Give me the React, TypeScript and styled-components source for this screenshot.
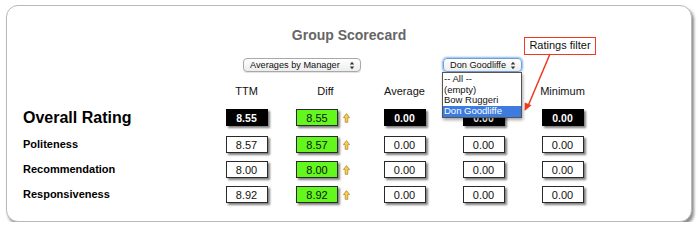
import React from "react";
import styled, { createGlobalStyle } from "styled-components";

const GlobalStyle = createGlobalStyle`
  html, body {
    margin: 0;
    padding: 0;
    background: #ffffff;
  }
  body {
    font-family: "Liberation Sans", Arial, Helvetica, sans-serif;
    color: #111;
  }
`;

type Cell = { value: string; dark?: boolean };
type Row = {
  label: string;
  main?: boolean;
  ttm: Cell;
  diff: string;
  rest: Cell[];
};

const rows: Row[] = [
  {
    label: "Overall Rating",
    main: true,
    ttm: { value: "8.55", dark: true },
    diff: "8.55",
    rest: [
      { value: "0.00", dark: true },
      { value: "0.00", dark: true },
      { value: "0.00", dark: true }
    ]
  },
  {
    label: "Politeness",
    ttm: { value: "8.57" },
    diff: "8.57",
    rest: [{ value: "0.00" }, { value: "0.00" }, { value: "0.00" }]
  },
  {
    label: "Recommendation",
    ttm: { value: "8.00" },
    diff: "8.00",
    rest: [{ value: "0.00" }, { value: "0.00" }, { value: "0.00" }]
  },
  {
    label: "Responsiveness",
    ttm: { value: "8.92" },
    diff: "8.92",
    rest: [{ value: "0.00" }, { value: "0.00" }, { value: "0.00" }]
  }
];

const headers = ["TTM", "Diff", "Average", "", "Minimum"];
const managers = ["-- All --", "(empty)", "Bow Ruggeri", "Don Goodliffe"];

const SelectArrows = () => (
  <svg width="6" height="9" viewBox="0 0 6 9">
    <polygon points="3,0.8 5.2,3.5 0.8,3.5" fill="#333" />
    <polygon points="3,8.2 5.2,5.5 0.8,5.5" fill="#333" />
  </svg>
);

const UpArrow = () => (
  <svg width="7" height="10" viewBox="0 0 7 10">
    <polygon
      points="3.5,0.6 6.6,4.6 4.8,4.6 4.8,9.3 2.2,9.3 2.2,4.6 0.4,4.6"
      fill="#f6cf52"
      stroke="#b8882c"
      strokeWidth="0.8"
      strokeLinejoin="round"
    />
  </svg>
);

const App = () => {
  return (
    <>
      <GlobalStyle />
      <Card>
        <Title>Group Scorecard</Title>
        <FilterRow>
          <ModeSelect>
            <SelectText>Averages by Manager</SelectText>
            <SelectArrows />
          </ModeSelect>
          <ManagerSlot>
            <ManagerSelect>
              <SelectText>Don Goodliffe</SelectText>
              <SelectArrows />
            </ManagerSelect>
            <OptionList>
              {managers.map((m) => (
                <OptionItem key={m} $selected={m === "Don Goodliffe"}>
                  {m}
                </OptionItem>
              ))}
            </OptionList>
          </ManagerSlot>
        </FilterRow>
        <HeaderRow>
          <span />
          {headers.map((h, i) => (
            <HeaderCell key={i}>{h}</HeaderCell>
          ))}
        </HeaderRow>
        <Rows>
          {rows.map((r) => (
            <ScoreRow key={r.label} $main={r.main}>
              <RowLabel $main={r.main}>{r.label}</RowLabel>
              <ValueBox $dark={r.ttm.dark}>{r.ttm.value}</ValueBox>
              <DiffCell>
                <ValueBox $green>{r.diff}</ValueBox>
                <UpArrow />
              </DiffCell>
              {r.rest.map((c, i) => (
                <ValueBox key={i} $dark={c.dark}>
                  {c.value}
                </ValueBox>
              ))}
            </ScoreRow>
          ))}
        </Rows>
        <Callout>Ratings filter</Callout>
        <CalloutArrow viewBox="0 0 686 217" width="686" height="217">
          <line
            x1="544"
            y1="49"
            x2="522"
            y2="101"
            stroke="#f2361f"
            strokeWidth="1.5"
          />
          <polygon points="518.5,106 518.8,97.5 525.5,100.3" fill="#f2361f" />
        </CalloutArrow>
      </Card>
    </>
  );
};

const Card = styled.div`
  position: relative;
  box-sizing: border-box;
  width: 686px;
  margin: 5px 0 0 6px;
  padding: 21px 0 18px 16px;
  border: 1px solid #b9b9b9;
  border-radius: 12px;
  background: #ffffff;
  box-shadow: 2px 3px 3px rgba(0, 0, 0, 0.45);
  display: flex;
  flex-direction: column;
`;

const Title = styled.div`
  margin-left: -16px;
  text-align: center;
  font-size: 14px;
  line-height: 16px;
  font-weight: bold;
  color: #666666;
`;

const grid = `
  display: grid;
  grid-template-columns: 184px repeat(5, 79px);
  align-items: center;
`;

const FilterRow = styled.div`
  ${grid}
  margin-top: 15px;
  height: 14px;
  position: relative;
  z-index: 2;
`;

const SelectBase = styled.div`
  box-sizing: border-box;
  height: 14px;
  display: flex;
  align-items: center;
  justify-content: space-between;
  padding: 0 5px 0 6px;
  border: 1px solid #a9a9a9;
  border-radius: 4px;
  background: linear-gradient(#ffffff, #ededed);
  box-shadow: 0 1px 1px rgba(0, 0, 0, 0.12);
`;

const ModeSelect = styled(SelectBase)`
  grid-column: 2 / 4;
  justify-self: start;
  margin-left: 36px;
  width: 118px;
`;

const ManagerSlot = styled.div`
  grid-column: 5;
  position: relative;
  margin-left: -1px;
  width: 79px;
`;

const ManagerSelect = styled(SelectBase)`
  width: 79px;
  border-color: #6f9fd8;
  box-shadow: 0 0 2px 1px #8cb8ec;
`;

const SelectText = styled.span`
  font-size: 9.2px;
  line-height: 12px;
  color: #111;
  white-space: nowrap;
`;

const OptionList = styled.div`
  position: absolute;
  top: 14px;
  left: -1px;
  box-sizing: border-box;
  width: 80px;
  border: 1px solid #555;
  background: #ffffff;
  box-shadow: 1px 2px 3px rgba(0, 0, 0, 0.35);
  padding-top: 1px;
`;

const OptionItem = styled.div<{ $selected?: boolean }>`
  height: 10.7px;
  line-height: 10.7px;
  font-size: 9.5px;
  padding-left: 1px;
  white-space: nowrap;
  color: ${(p) => (p.$selected ? "#ffffff" : "#111")};
  background: ${(p) => (p.$selected ? "#3c7ce0" : "transparent")};
`;

const HeaderRow = styled.div`
  ${grid}
  margin-top: 12.5px;
  height: 13px;
`;

const HeaderCell = styled.div`
  text-align: center;
  font-size: 11px;
  line-height: 13px;
  color: #111;
`;

const Rows = styled.div`
  margin-top: 11.5px;
  display: flex;
  flex-direction: column;
  gap: 8px;
`;

const ScoreRow = styled.div<{ $main?: boolean }>`
  ${grid}
  height: 17px;
  justify-items: center;
  margin-bottom: ${(p) => (p.$main ? "2px" : "0")};
`;

const RowLabel = styled.div<{ $main?: boolean }>`
  justify-self: start;
  font-weight: bold;
  font-size: ${(p) => (p.$main ? "16px" : "11px")};
  line-height: 17px;
  color: #000;
  white-space: nowrap;
`;

const ValueBox = styled.div<{ $dark?: boolean; $green?: boolean }>`
  box-sizing: border-box;
  width: 42px;
  height: 17px;
  display: flex;
  align-items: center;
  justify-content: center;
  font-size: ${(p) => (p.$dark ? "10.5px" : "11px")};
  font-weight: ${(p) => (p.$dark ? "bold" : "normal")};
  color: ${(p) => (p.$dark ? "#ffffff" : "#111")};
  background: ${(p) => (p.$dark ? "#000" : p.$green ? "#63f71e" : "#fff")};
  border: 1px solid ${(p) => (p.$dark ? "#000" : "#2a2a2a")};
  box-shadow: 2px 2px 2px rgba(0, 0, 0, 0.5);
`;

const DiffCell = styled.div`
  justify-self: start;
  margin-left: 10px;
  display: flex;
  align-items: center;
  gap: 5px;
`;

const Callout = styled.div`
  position: absolute;
  left: 517px;
  top: 31px;
  box-sizing: border-box;
  width: 72px;
  height: 18px;
  border: 1.5px solid #ee3a24;
  background: #fff;
  font-size: 11px;
  line-height: 15px;
  text-align: center;
  color: #111;
`;

const CalloutArrow = styled.svg`
  position: absolute;
  left: -1px;
  top: -1px;
  pointer-events: none;
  z-index: 3;
`;

export default App;
